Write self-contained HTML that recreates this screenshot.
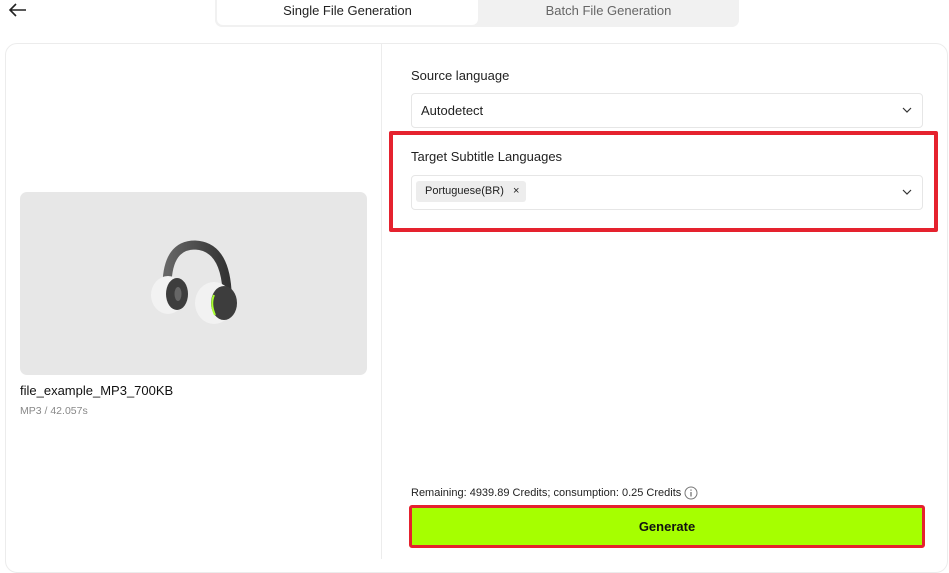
<!DOCTYPE html>
<html><head><style>
*{box-sizing:border-box;margin:0;padding:0}
body{width:949px;height:559px;background:#fff;font-family:"Liberation Sans",sans-serif;position:relative;overflow:hidden;color:#222}
.abs{position:absolute}
</style></head><body>
<svg class="abs" style="left:8px;top:2px" width="20" height="16" viewBox="0 0 20 16"><path d="M18 8H2M8 2L2 8l6 6" stroke="#222" stroke-width="1.6" fill="none"/></svg>
<div class="abs" style="left:215px;top:-6px;width:524px;height:33px;background:#f1f1f1;border-radius:7px"></div>
<div class="abs" style="left:217px;top:-6px;width:261px;height:31px;background:#fff;border-radius:6px"></div>
<div class="abs" style="left:217px;top:3px;width:261px;text-align:center;font-size:13px;color:#222">Single File Generation</div>
<div class="abs" style="left:478px;top:3px;width:261px;text-align:center;font-size:13px;color:#666">Batch File Generation</div>
<div class="abs" style="left:5px;top:43px;width:943px;height:530px;border:1px solid #ececec;border-radius:12px"></div>
<div class="abs" style="left:381px;top:44px;width:1px;height:515px;background:#ececec"></div>
<div class="abs" style="left:20px;top:192px;width:347px;height:183px;background:#e7e7e7;border-radius:7px"></div>
<svg class="abs" style="left:148px;top:240px" width="92" height="86" viewBox="0 0 92 86">
<defs><linearGradient id="b" x1="0" x2="1"><stop offset="0" stop-color="#666"/><stop offset="1" stop-color="#333"/></linearGradient></defs>
<path d="M19 44 Q20 5 47 5 Q76 6 79 50" stroke="url(#b)" stroke-width="9" fill="none"/>
<ellipse cx="20" cy="55" rx="17" ry="19" fill="#f2f2f2"/>
<ellipse cx="29" cy="54" rx="11" ry="16" fill="#3d3d3d"/>
<ellipse cx="30" cy="54" rx="3.5" ry="7" fill="#666"/>
<ellipse cx="66" cy="63" rx="19" ry="21" fill="#f2f2f2"/>
<ellipse cx="76" cy="63" rx="13" ry="17" fill="#3d3d3d"/>
<path d="M66 55 Q62 64 67 75" stroke="#a8ff30" stroke-width="2" fill="none"/>
</svg>
<div class="abs" style="left:20px;top:383px;font-size:13px;color:#111">file_example_MP3_700KB</div>
<div class="abs" style="left:20px;top:405px;font-size:10.5px;color:#888">MP3 / 42.057s</div>
<div class="abs" style="left:411px;top:68px;font-size:13px">Source language</div>
<div class="abs" style="left:411px;top:93px;width:512px;height:35px;border:1px solid #e6e6e6;border-radius:4px"></div>
<div class="abs" style="left:421px;top:103px;font-size:13px">Autodetect</div>
<svg class="abs" style="left:902px;top:106px" width="10" height="8" viewBox="0 0 10 8"><path d="M1 2l4 4 4-4" stroke="#333" stroke-width="1.2" fill="none"/></svg>
<div class="abs" style="left:389px;top:131px;width:549px;height:101px;border:4px solid #e5222e;border-radius:2px"></div>
<div class="abs" style="left:411px;top:149px;font-size:13px">Target Subtitle Languages</div>
<div class="abs" style="left:411px;top:175px;width:512px;height:35px;border:1px solid #e6e6e6;border-radius:4px"></div>
<div class="abs" style="left:416px;top:181px;width:110px;height:21px;background:#ededed;border-radius:3px;font-size:11px;line-height:21px;padding-left:9px">Portuguese(BR)&nbsp;&nbsp;&nbsp;×</div>
<svg class="abs" style="left:902px;top:188px" width="10" height="8" viewBox="0 0 10 8"><path d="M1 2l4 4 4-4" stroke="#333" stroke-width="1.2" fill="none"/></svg>
<div class="abs" style="left:411px;top:487px;font-size:11px;color:#222">Remaining: 4939.89 Credits; consumption: 0.25 Credits</div>
<svg class="abs" style="left:684px;top:486px" width="14" height="14" viewBox="0 0 14 14"><circle cx="7" cy="7" r="6" stroke="#777" fill="none"/><path d="M7 6v4.5M7 3.5v1.2" stroke="#777" stroke-width="1.3"/></svg>
<div class="abs" style="left:409px;top:505px;width:516px;height:43px;border:3px solid #e5222e;border-radius:3px;background:#a6ff00;text-align:center;line-height:37px;font-size:13px;font-weight:bold;color:#111">Generate</div>
</body></html>
